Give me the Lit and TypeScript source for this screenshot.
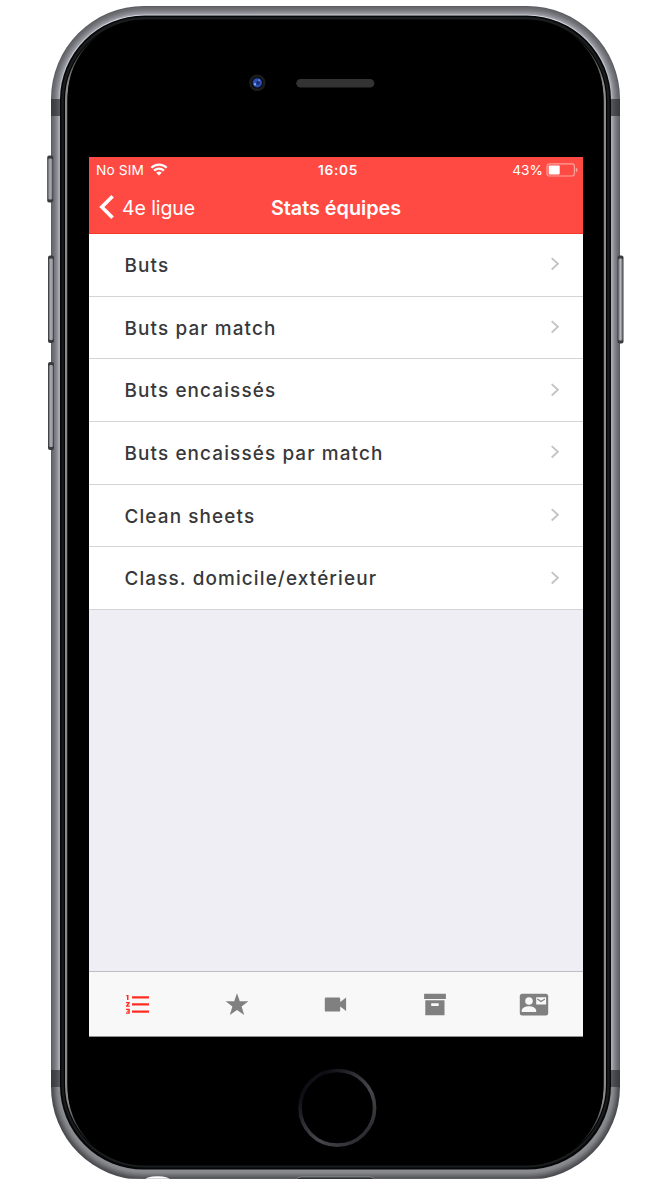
import { LitElement, html, css, svg } from "lit";
import { customElement, property } from "lit/decorators.js";

@customElement("phone-shell")
class PhoneShell extends LitElement {
  static styles = css`
    :host { position: absolute; inset: 0; display: block; }
    svg { display: block; }
  `;

  render() {
    const rim = [
      [0, "#5c5d61"], [1, "#68696d"], [2, "#6d6e73"], [3, "#75767b"], [4, "#7e7f85"],
      [5, "#888990"], [6, "#93949b"], [7, "#a2a3ab"], [8, "#a9aab3"],
    ] as const;
    const rimLow = ["#4b4c50", "#515256", "#5a5b5f", "#66676b", "#707175", "#7b7c80", "#838488", "#898a8e", "#8b8c91"];
    const ring = (i: number, c: string) => svg`
      <rect x=${51 + i} y=${6 + i * 1.1} width=${569 - 2 * i} height=${1174 - 2.2 * i} rx=${93 - i} fill=${c}></rect>`;
    const button = (x: number, y: number, h: number, right = false) => svg`
      <g>
        <rect x=${x} y=${y} width="6" height=${h} rx="2" fill="#3a3b3e"></rect>
        <rect x=${x + 0.8} y=${y + 3} width="4.4" height=${h - 6} rx="1.5" fill=${right ? "url(#keyR)" : "url(#keyL)"}></rect>
      </g>`;
    return html`
      <svg width="670" height="1191" viewBox="0 0 670 1191">
        <defs>
          <linearGradient id="keyL"><stop offset="0" stop-color="#67686c"/><stop offset=".45" stop-color="#b1b2b9"/><stop offset="1" stop-color="#7b7c82"/></linearGradient>
          <linearGradient id="keyR"><stop offset="0" stop-color="#77787e"/><stop offset=".5" stop-color="#b5b6bd"/><stop offset="1" stop-color="#67686c"/></linearGradient>
          <linearGradient id="fade" gradientUnits="userSpaceOnUse" x1="0" y1="20" x2="0" y2="1166">
            <stop offset="0" stop-color="#8a8a8a" stop-opacity="0"/><stop offset=".01" stop-color="#8a8a8a" stop-opacity="0"/>
            <stop offset=".055" stop-color="#8a8a8a"/><stop offset=".945" stop-color="#8a8a8a"/>
            <stop offset=".985" stop-color="#8a8a8a" stop-opacity="0"/><stop offset="1" stop-color="#8a8a8a" stop-opacity="0"/>
          </linearGradient>
          <linearGradient id="topLine" gradientUnits="userSpaceOnUse" x1="0" y1="14" x2="0" y2="110">
            <stop offset="0" stop-color="#e4e5ee"/><stop offset=".5" stop-color="#c9cad3"/><stop offset="1" stop-color="#a9aab3"/>
          </linearGradient>
          <linearGradient id="home" x1="0" y1="0" x2="1" y2="1">
            <stop offset="0" stop-color="#1b1b24"/><stop offset=".18" stop-color="#0d0d14"/><stop offset=".4" stop-color="#303036"/>
            <stop offset=".6" stop-color="#46464b"/><stop offset=".8" stop-color="#35353a"/><stop offset="1" stop-color="#17171c"/>
          </linearGradient>
          <clipPath id="cut"><rect width="670" height="1178.7"></rect></clipPath>
          <clipPath id="upper"><rect width="670" height="1087"></rect></clipPath>
          <clipPath id="lower"><rect y="1087" width="670" height="91.7"></rect></clipPath>
        </defs>
        <g clip-path="url(#upper)">${rim.map(([i, c]) => ring(i, c))}${ring(8, "url(#topLine)")}</g>
        <g clip-path="url(#lower)">${rimLow.map((c, i) => ring(i, c))}</g>
        <path d="M51 99h10v17h-10zM610 99h10v17h-10zM51 1070h10v17h-10zM610 1070h10v17h-10z" fill="#242729" fill-opacity=".64"/>
        ${button(47.2, 155.5, 47)}${button(48, 255.5, 87.5)}${button(48, 362, 88)}${button(617.5, 255.5, 88, true)}
        <rect x="60" y="15.6" width="551" height="1154" rx="84" fill="#050607"/>
        <rect x="61.5" y="17" width="548" height="1150.5" rx="83" fill="#191b1c"/>
        <rect x="63.8" y="19.5" width="543.4" height="1146" rx="81" fill="#000"/>
        <rect x="66.2" y="20.5" width="538.6" height="1144" rx="80" fill="#000" stroke="url(#fade)" stroke-width="2.4"/>
        <rect x="67.6" y="20" width="535.8" height="1145" rx="77" fill="#000"/>
        <g clip-path="url(#cut)">
          <ellipse cx="157.5" cy="1181" rx="13.5" ry="4.8" fill="#fff"/>
          <path d="M296 1180q1-3 5-3h69q4 0 5 3z" fill="#242528" stroke="#a0a1a5" stroke-width=".7"/>
        </g>
        <circle cx="257.3" cy="82.8" r="8.3" fill="#1c1c1e"/>
        <circle cx="257.3" cy="82.8" r="5.8" fill="#0a0b14"/>
        <circle cx="257.3" cy="82.8" r="4.6" fill="#2c50b4"/>
        <circle cx="258" cy="83" r="1.9" fill="#1a2c78"/>
        <circle cx="255" cy="84.2" r="1.2" fill="#7ea4ef"/><circle cx="259.3" cy="80.3" r="1" fill="#5d87df"/>
        <rect x="296.3" y="79" width="78" height="8.6" rx="4.3" fill="#333"/>
        <circle cx="337.3" cy="1107.8" r="37.3" fill="#000" stroke="url(#home)" stroke-width="3.6"/>
      </svg>`;
  }
}

@customElement("stat-row")
class StatRow extends LitElement {
  @property() label = "";
  static styles = css`
    :host { box-sizing: border-box; display: flex; align-items: center; justify-content: space-between;
      height: 62.7px; padding: 0 23px 0 35.5px; background: #fff; border-bottom: 1px solid #d4d4d6; color: #38383a; }
    .label { padding-top: 2px; font: 500 18.9px/24px Inter, sans-serif; letter-spacing: 1.13px; white-space: nowrap; }
    svg { display: block; margin-bottom: 1px; }
  `;
  render() {
    return html`<span class="label">${this.label}</span>
      <svg width="10" height="16" viewBox="0 0 10 16"><path d="M1.7 2.1 7.9 7.8 1.7 13.5" fill="none" stroke="#c4c4c8" stroke-width="1.9"/></svg>`;
  }
}

@customElement("app-root")
class AppRoot extends LitElement {
  static styles = css`
    :host { display: block; position: relative; box-sizing: border-box; width: 670px; height: 1191px;
      padding: 157px 87px 0 89px; background: #fff; overflow: hidden; font-family: Inter, sans-serif; }
    .screen { position: relative; display: flex; flex-direction: column; height: 880px; background: #efeef4; }
    header { height: 77px; box-sizing: border-box; background: #ff4a43; color: #fff; border-bottom: 1px solid #f5392b; }
    .status { display: grid; grid-template-columns: 1fr auto 1fr; align-items: center; height: 26px; padding: 0 5px 0 7px;
      font-size: 13.7px; line-height: 18px; }
    .carrier { display: flex; align-items: center; gap: 6px; letter-spacing: .15px; }
    .carrier svg { margin-bottom: 2px; }
    .clock { font-weight: 600; letter-spacing: .65px; padding-left: 2px; }
    .power { display: flex; align-items: center; justify-content: flex-end; gap: 3px; }
    .power svg { margin-bottom: 1px; }
    .nav { display: grid; grid-template-columns: 1fr auto 1fr; align-items: center; height: 49px; padding: 0 10px; }
    .back { display: flex; align-items: center; gap: 7px; font-size: 19.5px; letter-spacing: -.1px; }
    .back svg { margin-bottom: 2px; }
    .title { font-size: 19.8px; font-weight: 600; white-space: nowrap; }
    svg { display: block; }
    .list { display: flex; flex-direction: column; flex: 1; }
    .tabs { display: grid; grid-template-columns: repeat(5, 98.9px); align-items: center; justify-items: center; box-sizing: border-box;
      height: 66px; padding-top: 2px; background: #f8f8f8; border-top: 1px solid #bfbfc2; border-bottom: 1px solid #909090; color: #808080; }
    .active { color: #ff2d21; }
  `;

  private rows = ["Buts", "Buts par match", "Buts encaissés", "Buts encaissés par match", "Clean sheets", "Class. domicile/extérieur"];

  private icons = [
    svg`<g fill="currentColor"><path d="M9 6.2h17v2.3H9zM9 13.3h17v2.3H9zM9 20.4h17v2.3H9z"/><path d="M3.3 5h2.2v5H4V6.2h-.7zM3 12h3.8v1.1L4.9 15.6h1.9v1.2H3v-1.1l1.9-2.5H3zM3 18.7h3.8v5H3v-1.1h2.4v-.9H3.8v-1h1.6v-.8H3z"/></g>`,
    svg`<path fill="currentColor" d="m15 3.2 2.8 8h8.6l-6.8 5.3 2.6 8.5-7.2-5-7.2 5 2.6-8.5-6.8-5.3h8.6z"/>`,
    svg`<path fill="currentColor" d="M4.8 7.5H18q1.2 0 1.2 1.2v3.3l5.9-4.4v13.3l-5.9-4.4v3.9q0 1.2-1.2 1.2H5q-1.2 0-1.2-1.2V8.7q0-1.2 1-1.2z"/>`,
    svg`<path fill="currentColor" fill-rule="evenodd" d="M4.1 3.8h21.8V9H4.1zM5.3 10.2h19.2v15.1H5.3zM11.2 13.2v2.7h7.5v-2.7z"/>`,
    svg`<rect x=".8" y="3.8" width="28.4" height="21.8" rx="2.5" fill="currentColor"/><circle cx="10" cy="11" r="3.8" fill="#f8f8f8"/>
      <path fill="#f8f8f8" d="M2.7 21.9v-1.4c0-2.7 4.4-4.2 7.3-4.2s7.2 1.5 7.2 4.2v1.4zM17.2 7.2h9.9v7.3h-9.9z"/><path d="m18.4 9 3.7 2.6L25.9 9" fill="none" stroke="currentColor" stroke-width="1.2"/>`,
  ];

  render() {
    return html`
      <phone-shell></phone-shell>
      <main class="screen">
        <header>
          <div class="status">
            <span class="carrier">No SIM
              <svg width="18" height="13" viewBox="0 0 18 13"><g fill="none" stroke="#fff" stroke-width="2.3"><path d="M1.3 4.8c4.3-4.3 11.1-4.3 15.4 0"/><path d="M4.1 7.7c2.8-2.7 7-2.7 9.8 0"/></g><path fill="#fff" d="M6.2 9.7q2.8-2.3 5.6 0L9 12.5z"/></svg>
            </span>
            <span class="clock">16:05</span>
            <span class="power">43%
              <svg width="32" height="14" viewBox="0 0 32 14"><rect x="1" y=".8" width="27.4" height="12.2" rx="2.4" fill="none" stroke="#ffa19d" stroke-width="1.2"/><path d="M29.8 4.7q1.8.3 1.8 2.2t-1.8 2.2z" fill="#ffa19d"/><rect x="2.7" y="2.4" width="11" height="9" rx=".8" fill="#fff"/></svg>
            </span>
          </div>
          <div class="nav">
            <span class="back"><svg width="16" height="26" viewBox="0 0 16 26"><path d="M13.6 2.2 2.8 13l10.8 10.8" fill="none" stroke="#fff" stroke-width="3.6"/></svg>4e ligue</span>
            <span class="title">Stats équipes</span>
            <span></span>
          </div>
        </header>
        <div class="list">${this.rows.map((r) => html`<stat-row .label=${r}></stat-row>`)}</div>
        <nav class="tabs">
          ${this.icons.map((icon, i) => html`<svg class=${i === 0 ? "active" : ""} width="30" height="30" viewBox="0 0 30 30">${icon}</svg>`)}
        </nav>
      </main>`;
  }
}
